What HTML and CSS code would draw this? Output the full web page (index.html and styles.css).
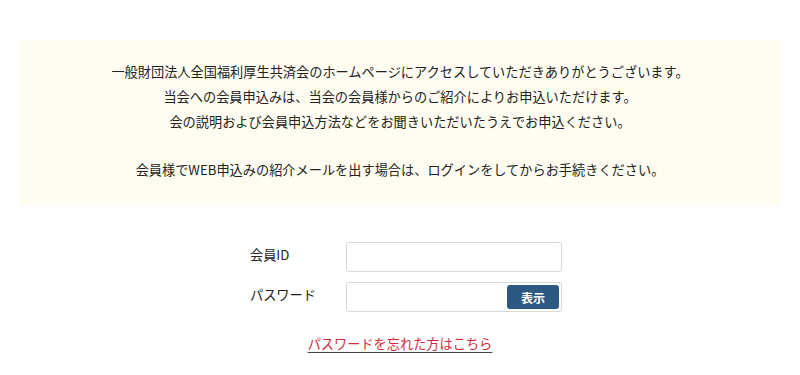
FILE: index.html
```html
<!DOCTYPE html>
<html lang="ja">
<head>
<meta charset="utf-8">
<link rel="stylesheet" href="styles.css">
</head>
<body>
<main class="page">
  <section class="notice">
    <p>一般財団法人全国福利厚生共済会のホームページにアクセスしていただきありがとうございます。</p>
    <p>当会への会員申込みは、当会の会員様からのご紹介によりお申込いただけます。</p>
    <p>会の説明および会員申込方法などをお聞きいただいたうえでお申込ください。</p>
    <p class="blank">&nbsp;</p>
    <p>会員様でWEB申込みの紹介メールを出す場合は、ログインをしてからお手続きください。</p>
  </section>
  <form class="login">
    <label class="label" for="mid">会員ID</label>
    <div class="field"><input id="mid" class="input" type="text"></div>
    <label class="label" for="pw">パスワード</label>
    <div class="field pw"><input id="pw" class="input" type="password"><button type="button" class="show">表示</button></div>
  </form>
  <p class="forgot"><a href="#">パスワードを忘れた方はこちら</a></p>
</main>
</body>
</html>
```
FILE: styles.css
```css
html, body { margin: 0; padding: 0; background: #fff; }
body {
  font-family: "Noto Sans CJK JP", "Noto Sans", sans-serif;
  color: #222;
  font-size: 13.2px;
}
.page { padding: 40px 20px 0; }
.notice {
  background: #fffdf1;
  padding: 19px 0 22px;
  text-align: center;
}
.notice p { margin: 0; line-height: 25px; }
.notice .blank { height: 23px; }
.login {
  display: grid;
  grid-template-columns: 96px 216px;
  row-gap: 10px;
  width: 312px;
  margin: 38px auto 0;
  padding-left: 12px;
  box-sizing: content-box;
  align-items: center;
}
.label { font-size: 13.2px; color: #222; line-height: 20px; margin-top: -4px; }
.field { position: relative; height: 30px; }
.input {
  box-sizing: border-box;
  width: 216px;
  height: 30px;
  border: 1px solid #d8d8d8;
  border-radius: 3px;
  padding: 0 8px;
  background: #fff;
  margin: 0;
  font: inherit;
}
.show {
  position: absolute;
  right: 3px;
  top: 3px;
  width: 52px;
  height: 24px;
  border: 0;
  border-radius: 3px;
  background: #2d5882;
  color: #fff;
  font-family: "Noto Sans CJK JP", sans-serif;
  font-size: 12px;
  font-weight: bold;
  padding: 0;
}
.forgot { text-align: center; margin: 22px 0 0; line-height: 20px; }
.forgot a {
  color: #d12b3e;
  font-size: 13.2px;
  text-decoration: underline;
  text-decoration-color: #444;
  text-underline-offset: 3px;
}
```
